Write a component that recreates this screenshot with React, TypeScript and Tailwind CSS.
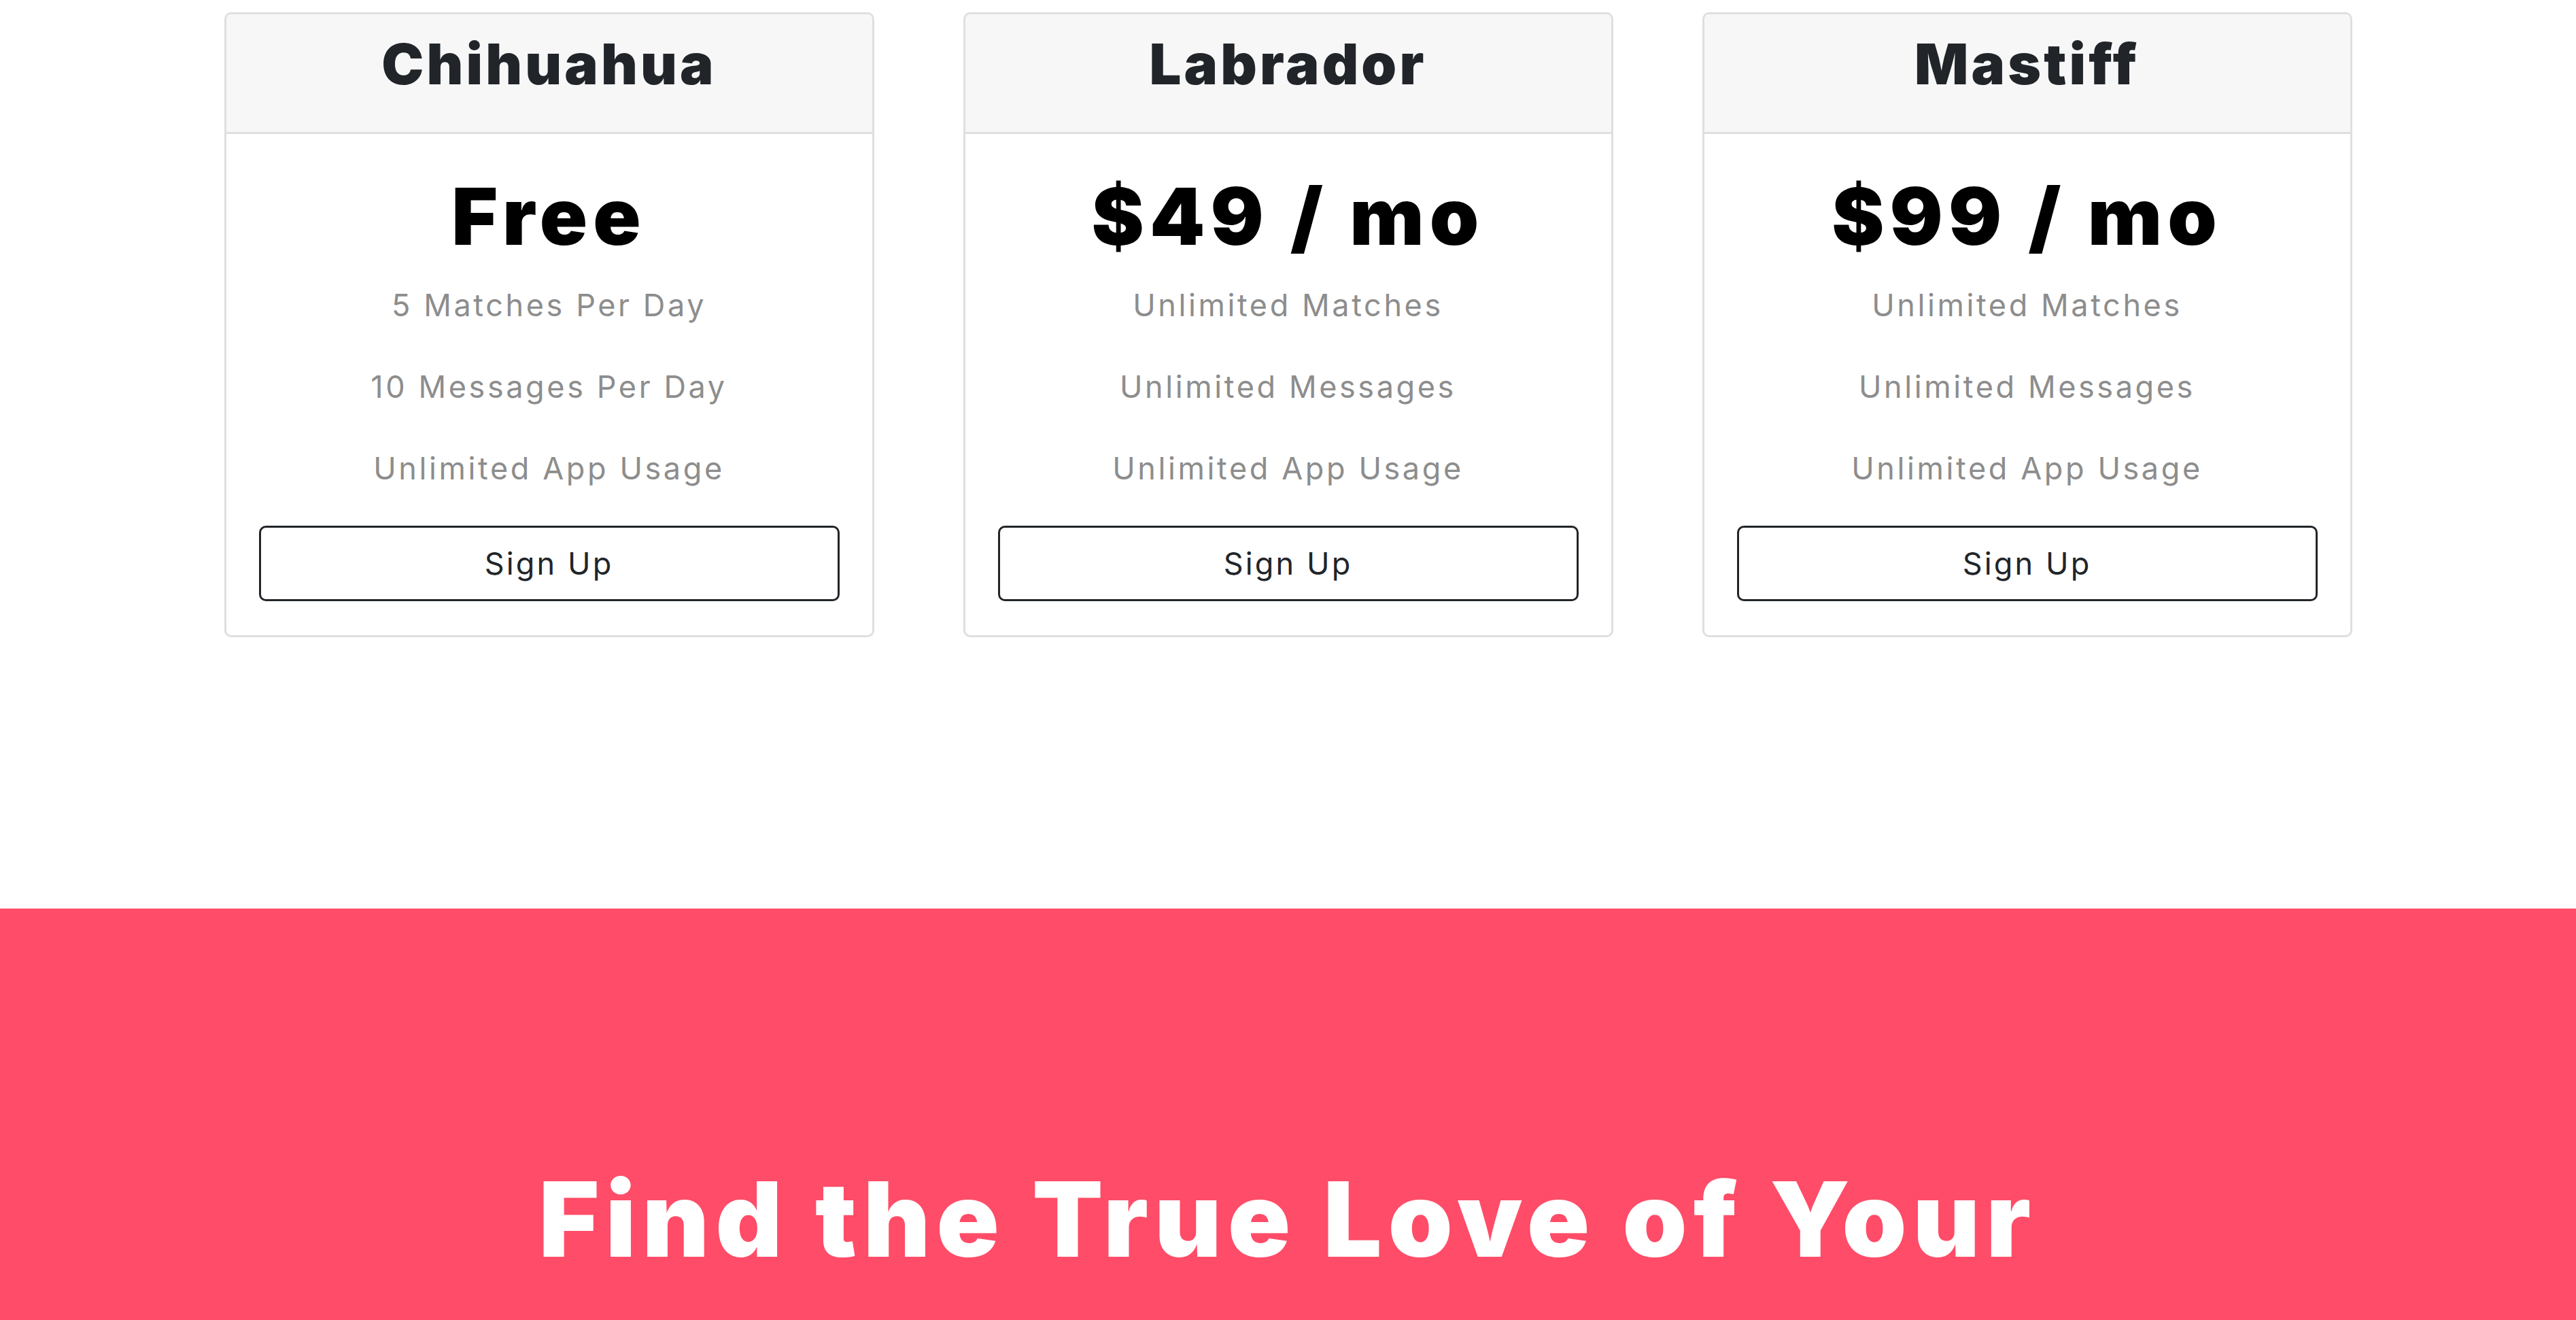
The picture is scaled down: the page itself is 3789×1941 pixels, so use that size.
const plans = [
  {
    name: 'Chihuahua',
    price: 'Free',
    features: ['5 Matches Per Day', '10 Messages Per Day', 'Unlimited App Usage'],
  },
  {
    name: 'Labrador',
    price: '$49 / mo',
    features: ['Unlimited Matches', 'Unlimited Messages', 'Unlimited App Usage'],
  },
  {
    name: 'Mastiff',
    price: '$99 / mo',
    features: ['Unlimited Matches', 'Unlimited Messages', 'Unlimited App Usage'],
  },
]

function PricingCard({ name, price, features }: { name: string; price: string; features: string[] }) {
  return (
    <div className="w-[956px] rounded-[10px] border-[3px] border-[#dfdfdf] bg-white overflow-hidden">
      <div className="h-[176px] border-b-[3px] border-[#dfdfdf] bg-[#f7f7f7] pt-[32px] text-center">
        <h3 className="text-[83px] leading-none font-black text-[#212529] tracking-[0.05em]">{name}</h3>
      </div>
      <div className="px-[48px] pt-[63px] pb-[50px] text-center">
        <h1 className="text-[116px] leading-none font-black text-black tracking-[0.07em]">{price}</h1>
        <ul className="mt-[13px]">
          {features.map((f) => (
            <li key={f} className="text-[45px] leading-[120px] text-[#8d8d8d] tracking-[0.08em]">
              {f}
            </li>
          ))}
        </ul>
        <button className="mt-[24px] flex h-[111px] w-full items-center justify-center rounded-[10px] border-[3px] border-[#212529] bg-white text-[45px] leading-none text-[#212529] tracking-[0.07em]">
          Sign Up
        </button>
      </div>
    </div>
  )
}

export default function App() {
  return (
    <div className="min-h-screen bg-white" style={{ fontFamily: 'Inter, "Open Sans", sans-serif' }}>
      <section className="flex items-start justify-center gap-[131px] pt-[18px] h-[1336px]">
        {plans.map((p) => (
          <PricingCard key={p.name} {...p} />
        ))}
      </section>
      <section className="bg-[#ff4c68] h-[605px] pt-[381px] text-center">
        <h2 className="text-[152px] leading-none font-black text-white tracking-[0.06em]">
          Find the True Love of Your
        </h2>
      </section>
    </div>
  )
}
